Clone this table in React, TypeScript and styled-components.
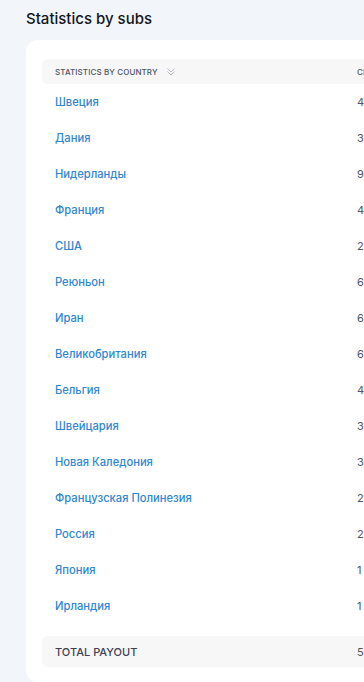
import React from 'react';
import styled, { createGlobalStyle } from 'styled-components';

const Global = createGlobalStyle`
    html, body {
        margin: 0;
        padding: 0;
        background: #f2f6fa;
        font-family: Inter, "Noto Sans", sans-serif;
        overflow: hidden;
    }
`;

const Page = styled.div`
    width: 364px;
    height: 682px;
    overflow: hidden;
    padding: 11px 0 0 26px;
    box-sizing: border-box;
`;

const Title = styled.h2`
    margin: 0 0 13px;
    font-size: 15px;
    line-height: 16px;
    font-weight: 500;
    color: #14151a;
`;

const Card = styled.div`
    width: 400px;
    background: #fff;
    border-radius: 12px;
    padding: 19px 16px 15px;
    box-sizing: border-box;
`;

const Table = styled.div`
    display: flex;
    flex-direction: column;
`;

const Row = styled.div<{ shaded?: boolean }>`
    display: grid;
    grid-template-columns: 302px 1fr;
    align-items: center;
    padding: 0 13px;
    height: ${p => (p.shaded ? '31px' : '36px')};
    background: ${p => (p.shaded ? '#f7f7f7' : 'transparent')};
    border-radius: 6px;
`;

const HeadRow = styled(Row)`
    height: 25px;
    background: #f7f7f7;
`;

const HeadCell = styled.div`
    display: flex;
    align-items: center;
    gap: 8px;
    font-size: 8px;
    font-weight: 500;
    letter-spacing: 0.1px;
    text-transform: uppercase;
    color: #4f5568;
    white-space: nowrap;
`;

const Country = styled.div`
    font-size: 11.2px;
    font-weight: 500;
    color: #2f86d1;
`;

const Value = styled.div`
    font-size: 11px;
    color: #4f5568;
`;

const Total = styled.div`
    font-size: 11px;
    font-weight: 500;
    color: #3d4252;
`;

const Spacer = styled.div`
    height: 12px;
`;

const rows = [
    ['Швеция', '4'],
    ['Дания', '3'],
    ['Нидерланды', '9'],
    ['Франция', '4'],
    ['США', '2'],
    ['Реюньон', '6'],
    ['Иран', '6'],
    ['Великобритания', '6'],
    ['Бельгия', '4'],
    ['Швейцария', '3'],
    ['Новая Каледония', '3'],
    ['Французская Полинезия', '2'],
    ['Россия', '2'],
    ['Япония', '1'],
    ['Ирландия', '1'],
];

const Chevrons = () => (
    <svg width="10" height="10" viewBox="0 0 10 10" fill="none" stroke="#b5b9c4" strokeWidth="1">
        <path d="M1.5 1.5l3.5 3.5 3.5-3.5" />
        <path d="M1.5 4.5l3.5 3.5 3.5-3.5" />
    </svg>
);

function App(): JSX.Element {
    return (
        <Page>
            <Global />
            <Title>Statistics by subs</Title>
            <Card>
                <Table>
                    <HeadRow>
                        <HeadCell>
                            Statistics by country
                            <Chevrons />
                        </HeadCell>
                        <HeadCell>Clicks</HeadCell>
                    </HeadRow>
                    {rows.map(([name, val]) => (
                        <Row key={name}>
                            <Country>{name}</Country>
                            <Value>{val}</Value>
                        </Row>
                    ))}
                    <Spacer />
                    <Row shaded>
                        <Total>TOTAL PAYOUT</Total>
                        <Value>5</Value>
                    </Row>
                </Table>
            </Card>
        </Page>
    );
}

export default App;
